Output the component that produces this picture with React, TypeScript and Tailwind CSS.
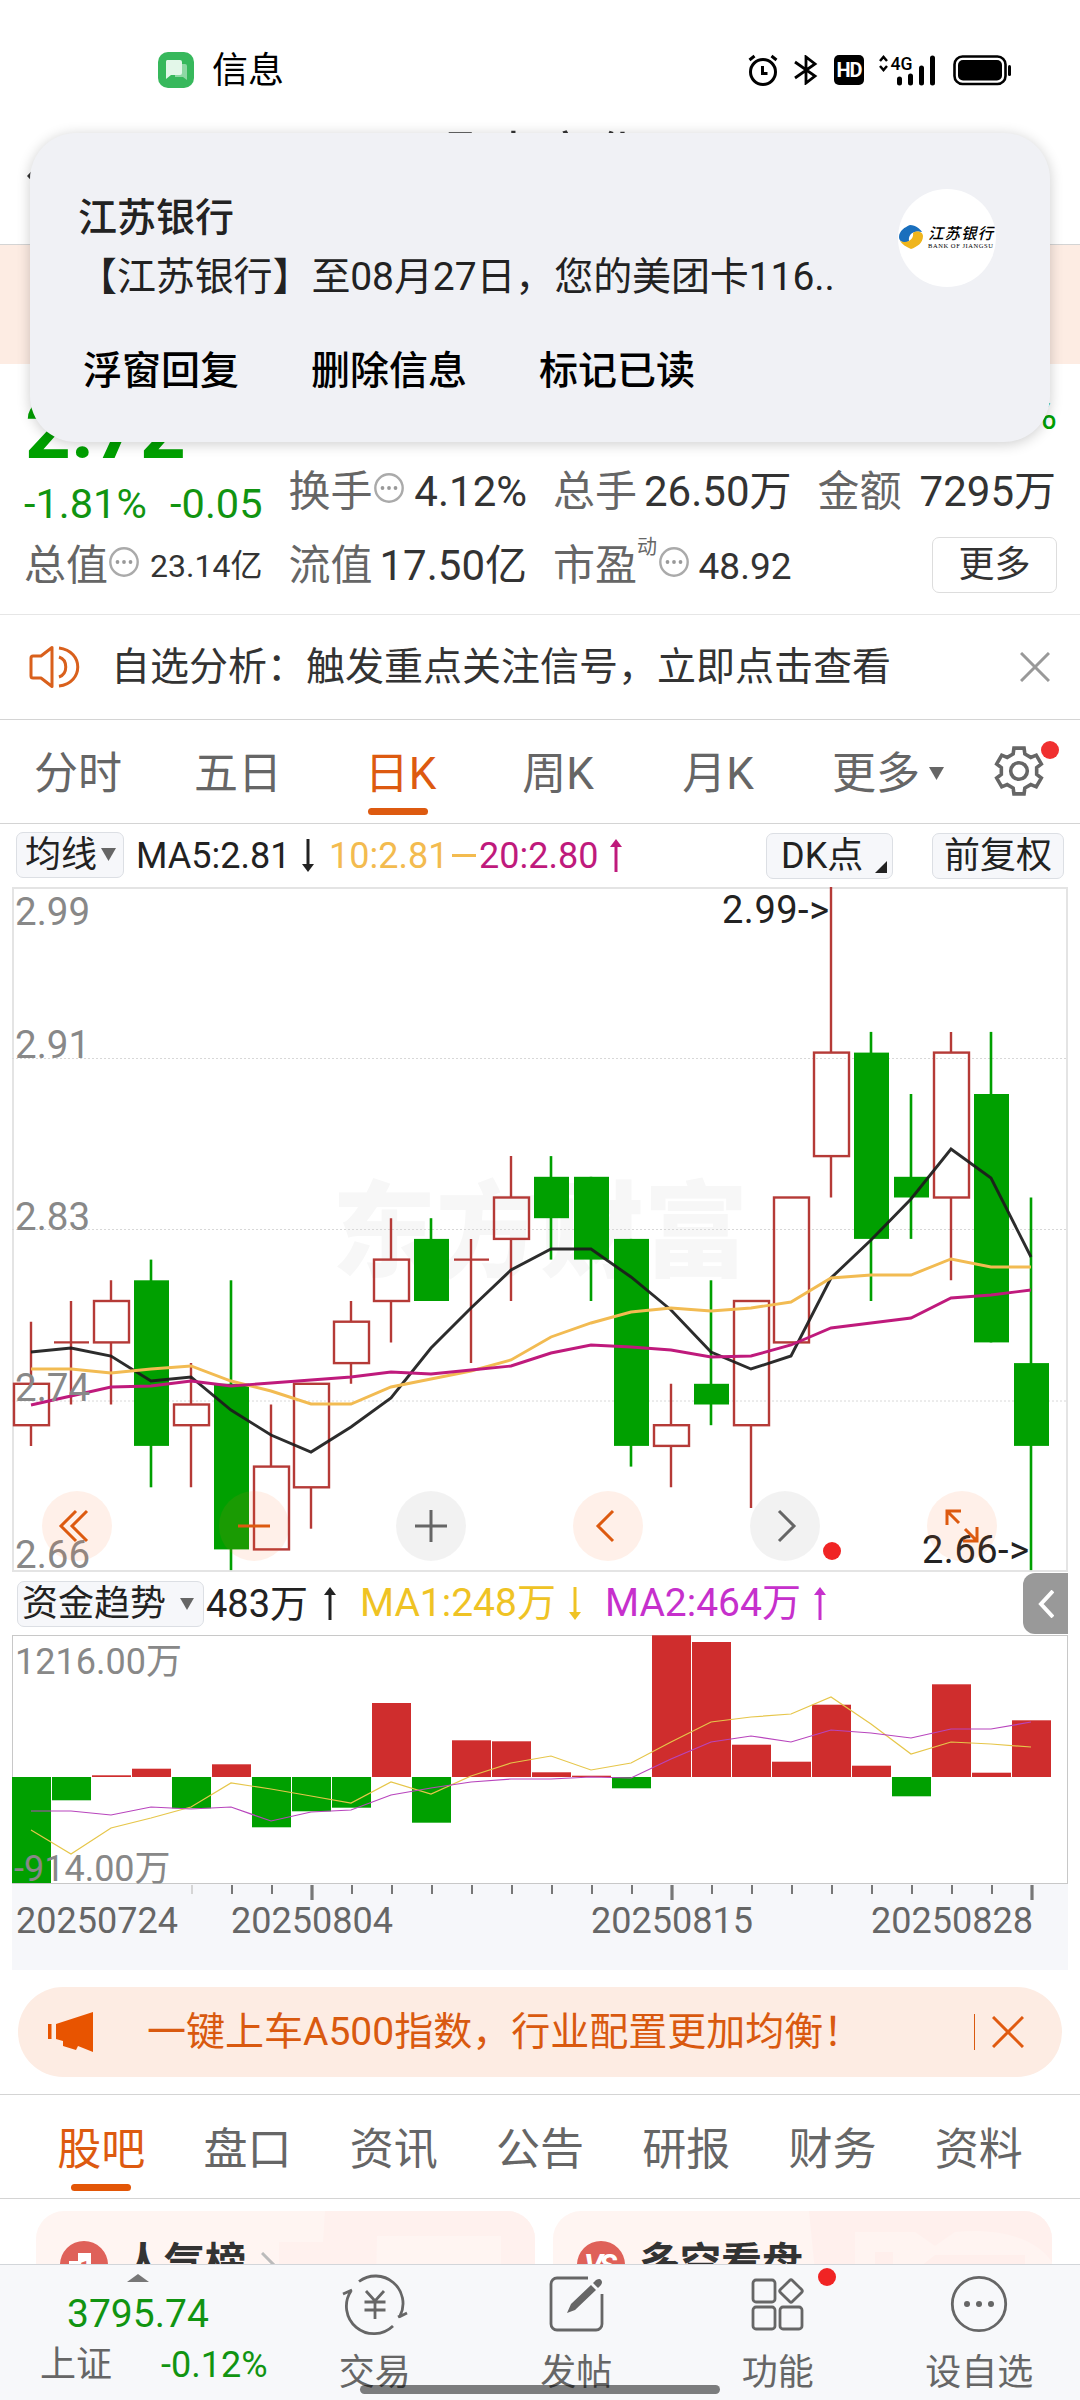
import { clsx } from 'clsx';

// [open, close, high, low]
const CANDLES: number[][] = [
  [2.73, 2.75, 2.78, 2.72],
  [2.77, 2.77, 2.79, 2.74],
  [2.77, 2.79, 2.80, 2.74],
  [2.80, 2.72, 2.81, 2.70],
  [2.73, 2.74, 2.76, 2.70],
  [2.75, 2.67, 2.80, 2.66],
  [2.67, 2.71, 2.74, 2.67],
  [2.70, 2.75, 2.75, 2.68],
  [2.76, 2.78, 2.79, 2.75],
  [2.79, 2.81, 2.83, 2.77],
  [2.82, 2.79, 2.83, 2.79],
  [2.81, 2.81, 2.82, 2.76],
  [2.82, 2.84, 2.86, 2.79],
  [2.85, 2.83, 2.86, 2.81],
  [2.85, 2.81, 2.85, 2.79],
  [2.82, 2.72, 2.82, 2.71],
  [2.72, 2.73, 2.75, 2.70],
  [2.75, 2.74, 2.80, 2.73],
  [2.73, 2.79, 2.79, 2.69],
  [2.77, 2.84, 2.84, 2.77],
  [2.86, 2.91, 2.99, 2.84],
  [2.91, 2.82, 2.92, 2.79],
  [2.85, 2.84, 2.89, 2.82],
  [2.84, 2.91, 2.92, 2.80],
  [2.89, 2.77, 2.92, 2.77],
  [2.76, 2.72, 2.84, 2.66],
];

const MA5 = [465, 461, 469, 494, 490, 523, 548, 565, 540, 511, 461, 421, 383, 362, 362, 390, 423, 465, 482, 469, 391, 353, 312, 262, 291, 370];
const MA10 = [482, 482, 486, 482, 479, 494, 504, 517, 517, 500, 492, 484, 473, 450, 436, 425, 421, 424, 421, 415, 391, 388, 388, 372, 380, 380];
const MA20 = [518, 509, 500, 499, 494, 499, 496, 493, 490, 485, 487, 483, 479, 466, 458, 460, 463, 470, 469, 458, 441, 436, 431, 411, 408, 403];

const FLOW = [-106, -23.3, 1.7, 8.3, -31.3, 12.7, -50.3, -34.3, -30.7, 74, -45.7, 36.7, 35.7, 4.7, 1.3, -11.3, 141.7, 135, 32.3, 15.3, 72.3, 11.3, -19.3, 92.7, 4.3, 56.7];
const FLOW_MA1 = [195, 219, 193, 183, 172, 148, 154, 161, 168, 147, 159, 141, 128, 121, 135, 128, 107, 87, 82, 79, 62, 89, 119, 107, 109, 112];
const FLOW_MA2 = [176, 176, 180, 172, 174, 172, 186, 177, 175, 160, 153, 147, 144, 144, 142, 143, 124, 107, 101, 107, 95, 98, 103, 94, 94, 87];

const GREEN = '#00a000';
const RED = '#b53a37';

const cx = (i: number) => 19 + i * 40;
const py = (price: number) => (2.99 - price) * 2070;
const points = (ys: number[]) => ys.map((y, i) => `${cx(i)},${y}`).join(' ');

// six teeth, 60 degrees apart
const GEAR = [0, 60, 120, 180, 240, 300]
  .flatMap((a) => [[a - 19, 18], [a - 12.5, 23.4], [a + 12.5, 23.4], [a + 19, 18]])
  .map(([deg, r]) => {
    const rad = (deg * Math.PI) / 180;
    return `${(r * Math.sin(rad)).toFixed(2)},${(-r * Math.cos(rad)).toFixed(2)}`;
  })
  .join(' ');

function StatusBar() {
  return (
    <div className="h-[100px] flex flex-row items-center pt-[40px] pl-[158px] pr-[68px] text-black">
      <svg className="size-9" viewBox="0 0 36 36">
        <rect width="36" height="36" rx="10" fill="#37b85c" />
        <path d="M17 12h10a2 2 0 0 1 2 2v14l-4-3h-8z" fill="#8ed8a4" />
        <path d="M9 8h13a2 2 0 0 1 2 2v11a2 2 0 0 1-2 2h-9l-5 4V10a2 2 0 0 1 1-2z" fill="#e3f7e9" />
      </svg>
      <span className="ml-[18px] mt-[2px] text-[36px] leading-none">信息</span>
      <div className="ml-auto flex flex-row items-center">
        <svg className="w-[30px] h-[32px]" viewBox="0 0 30 32" fill="none" stroke="#000" strokeWidth="3">
          <circle cx="15" cy="18" r="12.500" />
          <path d="M14.500 12v7.500h5M1.500 6l5-4M28.500 6l-5-4" />
        </svg>
        <svg className="ml-[16px] w-[24px] h-[30px]" viewBox="0 0 24 30" fill="none" stroke="#000" strokeWidth="2.800">
          <path d="M1 7l20 14-9 7V2l9 7L1 23" />
        </svg>
        <span className="ml-[16px] w-[30px] h-[30px] rounded-[5px] bg-black text-white font-bold text-[20px] leading-[31px] text-center tracking-[-1px]">HD</span>
        <svg className="ml-[15px] w-[56px] h-[31px]" viewBox="0 0 56 31">
          <path d="M1 6l3.500-4L8 6M1 11l3.500 4L8 11" fill="none" stroke="#000" strokeWidth="2.500" />
          <text x="11.500" y="15" fontSize="19" fontWeight="500" textLength="22" lengthAdjust="spacingAndGlyphs">4G</text>
          <path d="M20.500 24v4M31.500 21v7M42.500 13v15M53.500 3v25" stroke="#000" strokeWidth="5" strokeLinecap="round" />
        </svg>
        <svg className="ml-[18px] w-[59px] h-[31px]" viewBox="0 0 59 31">
          <rect x="1.500" y="1.500" width="51" height="27.500" rx="8" fill="none" stroke="#000" strokeWidth="2.600" />
          <rect x="5" y="5" width="44" height="20.500" rx="5" />
          <rect x="55" y="10" width="3" height="11" rx="1.500" />
        </svg>
      </div>
    </div>
  );
}

function BankLogo() {
  return (
    <div className="w-[98px] h-[98px] rounded-full bg-white flex items-center overflow-hidden">
      <svg viewBox="0 0 98 98">
        <path d="M1 48c0-6 6-10 11-12 6 0 10 4 12 7-8-2-14 2-13 9-4 3-10 1-10-4z" fill="#1a6fbd" />
        <path d="M25 47c0 7-6 11-12 13-5-2-9-5-11-8 8 3 14-2 13-8 4-3 10-1 10 3z" fill="#efb51c" />
        <text x="30" y="50" fontSize="15.500" fontWeight="500" fontStyle="italic" textLength="65">江苏银行</text>
        <text x="30" y="59" fontSize="6.500" textLength="65" fontFamily="'Liberation Serif', serif">BANK OF JIANGSU</text>
      </svg>
    </div>
  );
}

function Notification() {
  return (
    <div className="absolute left-[30px] top-[133px] w-[1020px] h-[309px] rounded-[46px] bg-[#f0f1f5] shadow-[0_2px_14px_rgba(0,0,0,0.2)] text-[#222]">
      <div className="flex flex-row justify-between pl-[48px] pr-[54px] pt-[56px]">
        <div className="text-[39px] whitespace-nowrap">
          <div className="leading-[58px] font-medium">江苏银行</div>
          <div className="leading-[60px] tracking-[-0.1px]">【江苏银行】至08月27日，您的美团卡116..</div>
        </div>
        <BankLogo />
      </div>
      <div className="flex flex-row gap-[72px] pl-[53px] pt-[45px] text-[39px] leading-none font-medium text-black">
        <button>浮窗回复</button>
        <button>删除信息</button>
        <button>标记已读</button>
      </div>
    </div>
  );
}

function Dots() {
  return (
    <svg className="size-[30px] mb-[9px] shrink-0" viewBox="0 0 30 30" fill="#999">
      <circle cx="15" cy="15" r="13.700" fill="none" stroke="#aaa" strokeWidth="2.400" />
      <circle cx="8.500" cy="15" r="1.900" />
      <circle cx="15" cy="15" r="1.900" />
      <circle cx="21.500" cy="15" r="1.900" />
    </svg>
  );
}

function Quote() {
  return (
    <div className="h-[251px] border-b border-[#e6e6e6] leading-none text-[#333] whitespace-nowrap">
      <div className="h-[100px] pt-[34px] pl-[25px] pr-[23px] flex flex-row items-center justify-between text-[#00a000]">
        <span className="text-[80px] font-bold">2.72</span>
        <span className="text-[42px] mb-8">2.92%</span>
      </div>
      <div className="grid grid-cols-4 gap-x-[26px] pl-[24px] pr-[24px] text-[42px]">
        <div className="h-[56px] flex flex-row items-center justify-between pt-6 text-[41.5px] text-[#119411]">
          <span>-1.81%</span>
          <span>-0.05</span>
        </div>
        <div className="h-[56px] flex flex-row items-center justify-between">
          <span className="flex flex-row items-center gap-[1px] text-[#666]">换手<Dots /></span>
          <span>4.12%</span>
        </div>
        <div className="h-[56px] flex flex-row items-center justify-between">
          <span className="text-[#666]">总手</span>
          <span>26.50万</span>
        </div>
        <div className="h-[56px] flex flex-row items-center justify-between">
          <span className="text-[#666]">金额</span>
          <span>7295万</span>
        </div>
        <div className="mt-[18px] h-[56px] flex flex-row items-center justify-between">
          <span className="flex flex-row items-center gap-[1px] text-[#666]">总值<Dots /></span>
          <span className="text-[32px]">23.14亿</span>
        </div>
        <div className="mt-[18px] h-[56px] flex flex-row items-center justify-between">
          <span className="text-[#666]">流值</span>
          <span>17.50亿</span>
        </div>
        <div className="mt-[18px] h-[56px] flex flex-row items-center justify-between">
          <span className="flex flex-row items-center text-[#666]">
            市盈
            <span className="text-[20px] mb-[38px] mr-[2px]">动</span>
            <Dots />
          </span>
          <span className="text-[37px]">48.92</span>
        </div>
        <div className="mt-[18px] h-[56px] flex flex-row items-center justify-end">
          <button className="-mr-[1px] mb-[3px] w-[125px] h-[56px] border border-[#ddd] rounded-[7px] text-[36px]">更多</button>
        </div>
      </div>
    </div>
  );
}

function Alert() {
  return (
    <div className="h-[105px] pl-[28px] pr-[30px] flex flex-row items-center border-b border-[#d4d4d4] text-[#333]">
      <svg className="w-[54px] h-[44px]" viewBox="0 0 54 44" fill="none" stroke="#d9601c" strokeWidth="3">
        <path d="M24 2.500v39L13 33H5a2 2 0 0 1-2-2V13a2 2 0 0 1 2-2h8z" strokeLinejoin="round" />
        <path d="M31 12c9 3 9 17 0 20M31 3c25 3 25 35 0 38" />
      </svg>
      <span className="ml-[29px] text-[39px] leading-none">自选分析：触发重点关注信号，立即点击查看</span>
      <svg className="ml-auto w-[30px] h-[30px]" viewBox="0 0 30 30" stroke="#999" strokeWidth="3">
        <path d="M1 1l28 28M29 1L1 29" />
      </svg>
    </div>
  );
}

function PeriodTabs() {
  return (
    <div className="h-[104px] -ml-[2px] flex flex-row border-b border-[#d4d4d4] text-[44px] leading-none text-[#666]">
      {['分时', '五日', '日K', '周K', '月K'].map((label) => (
        <div
          key={label}
          className={clsx('w-[160px] flex flex-col items-center pt-[32px]', label === '日K' && 'text-[#dd5a10]')}
        >
          {label === '日K' ? <span className="ml-[5px]">{label}</span> : label}
          {label === '日K' && <div className="mt-[12px] w-[60px] h-[7px] rounded-full bg-[#dd5a10]" />}
        </div>
      ))}
      <div className="ml-[34px] pt-[4px] flex flex-row items-center">
        更多
        <svg className="ml-[9px] w-[15px] h-[13px]" viewBox="0 0 15 13"><path d="M0 0h15L7.500 13z" fill="#666" /></svg>
      </div>
      <div className="relative ml-[48px] mt-[24px] w-[54px] h-[54px]">
        <svg viewBox="-27 -27 54 54" fill="none" stroke="#666" strokeWidth="3.600">
          <polygon points={GEAR} />
          <circle r="8.300" />
        </svg>
        <div className="absolute left-[49px] -top-[3px] size-[18px] rounded-full bg-[#f03030]" />
      </div>
    </div>
  );
}

function Arrow({ down = false, color }: { down?: boolean; color: string }) {
  return (
    <svg className={clsx('w-[12px] h-[33px]', down && 'rotate-180')} viewBox="0 0 12 33">
      <path d="M6 6v27" stroke={color} strokeWidth="3" />
      <path d="M6 0l6 8H0z" fill={color} />
    </svg>
  );
}

function MaBar() {
  return (
    <div className="h-[63px] pl-[16px] pr-[16px] flex flex-row items-center text-[36px] leading-none text-[#222] whitespace-nowrap">
      <button className="h-[46px] w-[108px] mb-[2px] border border-[#dcdfe4] rounded-[7px] bg-[#f6f7fa] flex flex-row items-center pl-[8px]">
        均线
        <svg className="ml-[4px] w-[15px] h-[13px]" viewBox="0 0 15 13"><path d="M0 0h15L7.500 13z" fill="#666" /></svg>
      </button>
      <span className="ml-[12px] w-[166px]">MA5:2.81</span>
      <Arrow down color="#222" />
      <span className="ml-[15px] w-[123px] text-[#f3bb4f]">10:2.81</span>
      <span className="w-[24px] h-[3px] bg-[#f3bb4f]" />
      <span className="ml-[3px] w-[131px] text-[#bf1a7c]">20:2.80</span>
      <Arrow color="#bf1a7c" />
      <button className="ml-auto h-[46px] w-[127px] border border-[#dcdfe4] rounded-[7px] bg-[#f6f7fa] flex flex-row items-center pl-[14px]">
        DK点
        <svg className="ml-[12px] mt-[22px] w-[12px] h-[12px]" viewBox="0 0 12 12"><path d="M12 0v12H0z" fill="#222" /></svg>
      </button>
      <button className="ml-[39px] h-[46px] w-[132px] border border-[#dcdfe4] rounded-[7px] bg-[#f6f7fa]">前复权</button>
    </div>
  );
}

const tools = [
  { hot: true, d: 'M23 -15L8 0l15 15M12 -15L-3 0l15 15', dx: -13 },
  { hot: true, d: 'M-16 0h32', dx: 0 },
  { hot: false, d: 'M-16 0h32M0 -16v32', dx: 0 },
  { hot: true, d: 'M6 -15L-9 0L6 15', dx: -1 },
  { hot: false, d: 'M-6 -15L9 0L-6 15', dx: 0 },
  { hot: true, d: 'M-15 -1v-14h14M-15 -15l12 12M15 1v14h-14M15 15l-12 -12', dx: 0 },
];

function CandleChart() {
  return (
    <div className="relative ml-[12px] w-[1056px] h-[685px] border-2 border-[#e4e4e4]">
      <svg className="block -m-[2px] w-[1056px] h-[685px]" viewBox="0 0 1056 685">
        <text x="528" y="382" textAnchor="middle" fontSize="104" fontWeight="900" fill="#f7f7f7">东方财富</text>
        {[171.5, 342.5, 514].map((y) => (
          <path key={y} d={`M0 ${y}h1056`} stroke="#d8d8d8" strokeDasharray="2 2" />
        ))}
        {CANDLES.map(([open, close, high, low], i) => {
          const up = close >= open;
          const top = py(Math.max(open, close));
          const bottom = py(Math.min(open, close));
          const x = cx(i);
          if (!up) {
            return (
              <g key={i} fill={GREEN}>
                <rect x={x - 1.3} y={py(high)} width="2.600" height={py(low) - py(high)} />
                <rect x={x - 17} y={top} width="35" height={bottom - top} />
              </g>
            );
          }
          return (
            <g key={i} fill="none" stroke={RED} strokeWidth="2.400">
              <path d={`M${x} ${py(high)}V${top}M${x} ${bottom}V${py(low)}`} />
              {top === bottom
                ? <path d={`M${x - 17} ${top}h35`} />
                : <rect x={x - 17} y={top} width="35" height={bottom - top} />}
            </g>
          );
        })}
        <g fill="none" strokeWidth="2.900">
          <polyline points={points(MA5)} stroke="#1c1c1c" strokeOpacity="0.930" />
          <polyline points={points(MA10)} stroke="#f2bb52" />
          <polyline points={points(MA20)} stroke="#bf1a7c" />
        </g>
        <g fontSize="38.500" fill="#888">
          <text x="3" y="38">2.99</text>
          <text x="3" y="171">2.91</text>
          <text x="3" y="343">2.83</text>
          <text x="3" y="514">2.74</text>
          <text x="3" y="681">2.66</text>
        </g>
        <g fontSize="38" fill="#222">
          <text x="710" y="36" textLength="107">{'2.99->'}</text>
          <text x="910" y="676" textLength="107">{'2.66->'}</text>
        </g>
      </svg>
      <div className="absolute left-[28px] right-[69px] top-[602px] flex flex-row justify-between">
        {tools.map((t) => (
          <div key={t.d} className={clsx('size-[70px] rounded-full', t.hot ? 'bg-[#ff6a20]/10' : 'bg-black/5')}>
            <svg viewBox="-35 -35 70 70" fill="none" stroke={t.hot ? '#dd5a10' : '#666'} strokeWidth="3">
              <path d={t.d} transform={`translate(${t.dx} 0)`} />
            </svg>
          </div>
        ))}
      </div>
      <div className="absolute left-[809px] top-[653px] size-[18px] rounded-full bg-[#f02424]" />
    </div>
  );
}

function FlowBar() {
  return (
    <div className="h-[63px] pl-[17px] pr-[12px] flex flex-row items-center text-[38px] leading-none whitespace-nowrap text-[#222]">
      <button className="h-[46px] w-[187px] border border-[#dcdfe4] rounded-[7px] bg-[#f6f7fa] flex flex-row items-center pl-[4px] text-[36px]">
        资金趋势
        <svg className="ml-[14px] w-[14px] h-[12px]" viewBox="0 0 15 13"><path d="M0 0h15L7.500 13z" fill="#666" /></svg>
      </button>
      <span className="ml-[2px] w-[118px]">483万</span>
      <Arrow color="#222" />
      <span className="ml-[24px] w-[209px] text-[39px] text-[#efc324]">MA1:248万</span>
      <Arrow down color="#efc324" />
      <span className="ml-[24px] w-[209px] text-[39px] text-[#c630cc]">MA2:464万</span>
      <Arrow color="#c630cc" />
      <div className="ml-auto w-[45px] h-[61px] rounded-l-[12px] bg-[#999] flex items-center justify-center">
        <svg className="w-[16px] h-[28px]" viewBox="0 0 16 28" fill="none" stroke="#fff" strokeWidth="4">
          <path d="M15 1L3 14l12 13" />
        </svg>
      </div>
    </div>
  );
}

function FlowChart() {
  return (
    <div className="ml-[12px] w-[1056px] h-[335px] bg-[#f6f7fa]">
      <svg className="block" width="1056" height="335" viewBox="0 0 1056 335">
        <rect x="0.500" y="0.500" width="1055" height="248" fill="#fff" stroke="#c8c8c8" />
        {FLOW.map((v, i) => (
          <rect
            key={i}
            x={i * 40}
            y={v > 0 ? 142 - v : 142}
            width="39"
            height={Math.abs(v)}
            fill={v > 0 ? '#cf2d2d' : GREEN}
          />
        ))}
        <polyline points={points(FLOW_MA1)} fill="none" stroke="#e6c64a" strokeWidth="1.200" />
        <polyline points={points(FLOW_MA2)} fill="none" stroke="#b845bd" strokeWidth="1.200" />
        <g fontSize="36" fill="#888">
          <text x="3" y="39">1216.00万</text>
          <text x="2" y="246">-914.00万</text>
        </g>
        {FLOW.map((_, i) => {
          if (i < 4) return null;
          const major = i % 9 === 7;
          return (
            <path
              key={i}
              d={`M${cx(i) + 1} 250v${major ? 15 : 9}`}
              stroke={i === 4 ? '#d5d5d5' : '#777'}
              strokeWidth={major ? 3.2 : 2}
            />
          );
        })}
        <g fontSize="36" fill="#666">
          <text x="4" y="298" textLength="162">20250724</text>
          <text x="219" y="298" textLength="162">20250804</text>
          <text x="579" y="298" textLength="162">20250815</text>
          <text x="859" y="298" textLength="162">20250828</text>
        </g>
      </svg>
    </div>
  );
}

function Banner() {
  return (
    <div className="mt-[17px] mx-[18px] h-[90px] rounded-full bg-[#fdece3] flex flex-row items-center pl-[29px] pr-[38px] text-[#d9590f]">
      <svg className="w-[47px] h-[40px]" viewBox="0 0 47 40" fill="#e85400">
        <path d="M1 12h3.500v15H1zM9 12L46 0v40l-15-6-2 4-13-4v-5l-7-2z" />
      </svg>
      <span className="ml-[53px] text-[39px] leading-none whitespace-nowrap">一键上车A500指数，行业配置更加均衡！</span>
      <span className="ml-auto w-px h-[36px] bg-[#d9590f]" />
      <svg className="ml-[17px] w-[32px] h-[32px]" viewBox="0 0 32 32" stroke="#e05a10" strokeWidth="3">
        <path d="M1 1l30 30M31 1L1 31" />
      </svg>
    </div>
  );
}

function InfoTabs() {
  return (
    <div className="mt-[17px] h-[105px] border-y border-[#d4d4d4] px-[28px] grid grid-cols-7 text-[44px] leading-none text-[#666]">
      {['股吧', '盘口', '资讯', '公告', '研报', '财务', '资料'].map((label, i) => (
        <div key={label} className={clsx('flex flex-col items-center pt-[33px]', i === 0 && 'text-[#dd5a10]')}>
          {label}
          {i === 0 && <div className="mt-[12px] w-[60px] h-[7px] rounded-full bg-[#e35607]" />}
        </div>
      ))}
    </div>
  );
}

function Cards() {
  return (
    <div className="h-[65px] pt-[12px] overflow-hidden pl-[36px] pr-[28px] grid grid-cols-2 gap-[18px] text-[41px] leading-none font-bold text-[#333] whitespace-nowrap">
      <div className="relative h-[120px] rounded-[28px] bg-[#fff5f2] overflow-hidden">
        <svg className="absolute inset-0" width="499" height="120">
          <path d="M289 0h210v120H243V31h44z" fill="#fff1ee" />
          <path d="M341 25h124v95H339z" fill="#fff5f2" />
        </svg>
        <div className="relative flex flex-row pl-[24px] pt-[30px]">
          <svg className="size-[48px]" viewBox="0 0 48 48">
            <circle cx="24" cy="24" r="24" fill="#df6159" />
            <path d="M9 20h9v-8h13v28H9z" fill="#fff" />
            <text x="20" y="32" fontSize="16" fill="#df6159">1</text>
          </svg>
          <span className="ml-[15px] mt-[2px]">人气榜</span>
          <svg className="ml-[15px] mt-[11px] w-[16px] h-[26px]" viewBox="0 0 16 26" fill="none" stroke="#bbb" strokeWidth="3">
            <path d="M1 1l12 12L1 25" />
          </svg>
        </div>
      </div>
      <div className="relative h-[120px] rounded-[28px] bg-[#fff5f2] overflow-hidden">
        <svg className="absolute inset-0" width="499" height="120">
          <path d="M256 0h243v120H268z" fill="#fff0ed" />
          <path d="M302 21h60l20 14 20-14c40-4 80 4 97 30v70H302z" fill="#fff4f1" />
          <path d="M322 41h18v79h-18zM362 60l20-16h90v60H362z" fill="#ffefec" />
        </svg>
        <div className="relative flex flex-row pl-[24px] pt-[30px]">
          <svg className="size-[48px]" viewBox="0 0 48 48">
            <circle cx="24" cy="24" r="24" fill="#df6159" />
            <text x="7" y="34" fontSize="30" fontStyle="italic" fill="#fff" textLength="33">VS</text>
          </svg>
          <span className="ml-[14px] mt-[2px]">多空看盘</span>
        </div>
      </div>
    </div>
  );
}

const navItems = [
  {
    label: '交易',
    icon: (
      <>
        <path d="M-16 -22.500A27.500 27.500 0 0 1 25 12M24 13l8 -4M18 22A27.500 27.500 0 0 1 -24 -13M-23 -14l-9 4M25 12l-2 1" />
        <path d="M-9 -13L0 -3L9 -13M0 -3v18M-10.500 -2h21M-10.500 6h21" />
      </>
    ),
  },
  {
    label: '发帖',
    icon: (
      <>
        <path d="M12 -26h-31a6 6 0 0 0 -6 6v40a6 6 0 0 0 6 6h39a6 6 0 0 0 6 -6v-30" />
        <path d="M-9 9l4 -9L15 -19l5 5L-1 6zM17 -21l3 -3q4 -2 5 0q2 2 0 5l-3 3z" fill="#666" stroke="none" />
      </>
    ),
  },
  {
    label: '功能',
    icon: (
      <>
        <rect x="-25" y="-24" width="22" height="22" rx="3" />
        <rect x="-25" y="3" width="22" height="22" rx="3" />
        <rect x="2" y="3" width="22" height="22" rx="3" />
        <rect x="-8.500" y="-8.500" width="17" height="17" rx="2" transform="translate(13 -13) rotate(45)" />
      </>
    ),
  },
  {
    label: '设自选',
    icon: (
      <>
        <circle r="26.700" />
        <path d="M-12 0h.01M0 0h.01M12 0h.01" strokeWidth="6" strokeLinecap="round" />
      </>
    ),
  },
];

function BottomNav() {
  return (
    <div className="relative h-[136px] border-t border-[#d3d6da] bg-[#f7f8fa] flex flex-row text-[36px] leading-none text-[#666]">
      <div className="w-[274px] text-[#119411]">
        <svg className="mt-[9px] ml-[127px] w-[22px] h-[8px]" viewBox="0 0 22 8"><path d="M0 8L11 0l11 8z" fill="#777" /></svg>
        <div className="mt-[13px] ml-[67px] text-[39px]">3795.74</div>
        <div className="mt-[13px] pl-[40px] flex flex-row">
          <span className="w-[121px] text-[#666]">上证</span>
          <span>-0.12%</span>
        </div>
      </div>
      {navItems.map((item) => (
        <div key={item.label} className="relative flex-1 flex flex-col items-center pt-[3px]">
          <svg className="size-[72px]" viewBox="-36 -36 72 72" fill="none" stroke="#666" strokeWidth="2.800">
            {item.icon}
          </svg>
          <span className="mt-[15px]">{item.label}</span>
          {item.label === '功能' && <div className="absolute left-[141px] top-[3px] size-[18px] rounded-full bg-[#f02424]" />}
        </div>
      ))}
      <div className="absolute left-[360px] top-[120px] w-[360px] h-[9px] rounded-full bg-black/50" />
    </div>
  );
}

export default function App() {
  return (
    <div className="relative w-[1080px] h-[2400px] overflow-hidden bg-white font-[Roboto,'Noto_Sans_CJK_SC',sans-serif]">
      <StatusBar />
      <div className="h-[145px] border-b border-[#d4d4d4] flex flex-row items-center pl-[27px] pr-[27px] justify-between text-[#333]">
        <svg className="w-[20px] h-[36px] mt-2" viewBox="0 0 20 36" fill="none" stroke="#333" strokeWidth="3"><path d="M18 1L2 18l16 17" /></svg>
        <span className="text-[53px] leading-none mb-[28px]">鼎中文化</span>
        <span className="w-[20px]" />
      </div>
      <div className="h-[119px] bg-[#fdece3]" />
      <Quote />
      <Alert />
      <PeriodTabs />
      <MaBar />
      <CandleChart />
      <FlowBar />
      <FlowChart />
      <Banner />
      <InfoTabs />
      <Cards />
      <BottomNav />
      <Notification />
    </div>
  );
}
